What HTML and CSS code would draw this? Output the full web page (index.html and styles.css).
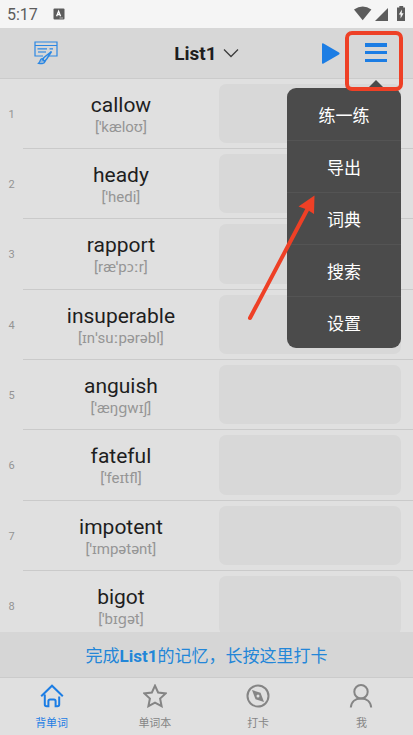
FILE: index.html
```html
<!DOCTYPE html>
<html lang="zh-CN">
<head>
<meta charset="utf-8">
<meta name="viewport" content="width=device-width, initial-scale=1">
<title>List1</title>
<link rel="stylesheet" href="styles.css">
</head>
<body>
<div class="app">
  <div class="status">
    <span class="clock">5:17</span>
    <svg class="badge" width="12" height="12" viewBox="0 0 12 12"><rect x=".5" y=".5" width="11" height="11" rx="1" fill="#5c5c5c"/><path d="M3.6 8.2 5.6 3.2 7.6 8.2M4.3 6.7H6.9" fill="none" stroke="#fff" stroke-width="1.3"/><path d="M6.500 10H10" stroke="#ccc" stroke-width=".8"/></svg>
    <svg class="signals" width="52" height="16" viewBox="0 0 52 16" fill="#5c5c5c"><path d="M0 3.400Q8.700-2.600 17.400 3.400L8.700 14.200Z"/><path d="M21 15 34 2V15Z"/><path d="M45.300 0H49.200V1.500H51V15H43V1.500H45.300Z"/><path d="M48 3.500 44.800 8.500H46.600V12.500L49.600 7.200H47.700Z" fill="#f5f5f5"/></svg>
  </div>
  <header class="bar">
    <button class="icon-btn notes" aria-label="Notes">
      <svg width="24" height="24" viewBox="0 0 24 24" fill="none" stroke="#2b87e3" stroke-width="1.200"><path d="M9 15H1V1H23V15H15M1 4.500H23M3.500 7.800H13M15.500 7.800H19"/><path d="M4 11H12" stroke-width="1.600" stroke-opacity=".7"/><path d="M17.500 10.500 10 16.500 8.500 18.500 10.800 20.300 13 17.500Z" stroke-width="1.500"/><path d="M8 17.500C5.500 18 7 20.500 4.500 22.300 8 23.200 10.500 22.500 11 20.500Z" stroke-width="1.200" fill="#2b87e3" fill-opacity=".4"/></svg>
    </button>
    <button class="title">List1
      <svg width="16" height="10" viewBox="0 0 16 10" fill="none" stroke="#3c3c3c" stroke-width="1.300"><path d="M1 1.500 8 8.500 15 1.500"/></svg>
    </button>
    <div class="actions">
      <button class="icon-btn" aria-label="Play"><svg width="18" height="21" viewBox="0 0 18 21" fill="#1c7de4"><path d="M0 1.200Q0-.4 1.500.5L17 9.500Q18.200 10.500 17 11.500L1.500 20.500Q0 21.400 0 19.800Z"/></svg></button>
      <button class="icon-btn" aria-label="Menu"><svg width="22" height="20" viewBox="0 0 22 20" fill="#1c7de4"><path d="M0 0H22V4H0ZM0 8H22V11H0ZM0 16H22V19H0Z"/></svg></button>
    </div>
  </header>
  <main class="list-wrap">
    <ol class="list">
      <li><span class="num">1</span><div class="word"><b>callow</b><i>[ˈkæloʊ]</i></div><div class="card"></div></li>
      <li><span class="num">2</span><div class="word"><b>heady</b><i>[ˈhedi]</i></div><div class="card"></div></li>
      <li><span class="num">3</span><div class="word"><b>rapport</b><i>[ræˈpɔːr]</i></div><div class="card"></div></li>
      <li><span class="num">4</span><div class="word"><b>insuperable</b><i>[ɪnˈsuːpərəbl]</i></div><div class="card"></div></li>
      <li><span class="num">5</span><div class="word"><b>anguish</b><i>[ˈæŋɡwɪʃ]</i></div><div class="card"></div></li>
      <li><span class="num">6</span><div class="word"><b>fateful</b><i>[ˈfeɪtfl]</i></div><div class="card"></div></li>
      <li><span class="num">7</span><div class="word"><b>impotent</b><i>[ˈɪmpətənt]</i></div><div class="card"></div></li>
      <li><span class="num">8</span><div class="word"><b>bigot</b><i>[ˈbɪɡət]</i></div><div class="card"></div></li>
    </ol>
  </main>
  <button class="checkin">完成<strong>List1</strong>的记忆，长按这里打卡</button>
  <nav class="tabs">
    <a href="#" class="active"><svg viewBox="0 0 24 24"><path d="M1.200 12.300 12 1.700 22.800 12.300M4.800 10.500V20.500Q4.800 22.300 6.600 22.300H8.400V17Q8.400 15.500 10 15.500H14Q15.600 15.500 15.600 17V22.300H17.400Q19.200 22.300 19.200 20.500V12.500"/></svg>背单词</a>
    <a href="#"><svg viewBox="0 0 24 24"><path d="M12 1.700 15.100 8.500 22.700 9.400 17.100 14.500 18.600 22.200 12 18.600 5.400 22.200 6.900 14.500 1.300 9.400 8.900 8.500Z"/></svg>单词本</a>
    <a href="#"><svg viewBox="0 0 24 24"><circle cx="12" cy="12" r="10.500"/><path d="M6 6 14.500 8.800 18 18 9.500 15.200Z" fill="#858585" stroke="none"/><circle cx="12" cy="12" r="1.500" fill="#e0e0e0" stroke="none"/></svg>打卡</a>
    <a href="#"><svg viewBox="0 0 24 24"><circle cx="12" cy="7.800" r="6.700"/><path d="M1.800 23.500C2.300 17.500 6.500 14.500 12 14.500S21.700 17.500 22.200 23.500"/></svg>我</a>
  </nav>
  <div class="menu">
    <button>练一练</button>
    <button>导出</button>
    <button>词典</button>
    <button>搜索</button>
    <button>设置</button>
  </div>
  <div class="highlight"></div>
  <svg class="pointer" width="68" height="128" viewBox="0 0 68 128"><path d="M3 124 60 16" stroke="#ee4026" stroke-width="4" stroke-linecap="round"/><path d="M67.500 1.500 67 20 60 15.500 51.500 12.500Z" fill="#ee4026"/></svg>
</div>
</body>
</html>
```

FILE: styles.css
```css
* { box-sizing: border-box; }

body {
  margin: 0;
  background: #e0e0e0;
  font-family: Roboto, "Noto Sans", "Noto Sans CJK SC", sans-serif;
  color: #1e1e1e;
}

button {
  border: 0;
  padding: 0;
  background: none;
  font: inherit;
  color: inherit;
}

svg { display: block; flex: none; }

.app {
  position: relative;
  display: flex;
  flex-direction: column;
  height: 100vh;
  overflow: hidden;
}

.status {
  display: flex;
  align-items: center;
  flex: none;
  height: 28px;
  padding: 0 7px;
  background: #f5f5f5;
}

.clock { font-size: 16px; color: #5c5c5c; }
.badge { margin-left: 15px; }
.signals { margin-left: auto; }

.bar {
  display: grid;
  grid-template-columns: 1fr auto 1fr;
  align-items: center;
  flex: none;
  height: 51px;
  padding: 0 26px;
  background: #d7d7d7;
  border-bottom: 1px solid #cbcbcb;
}

.title {
  display: flex;
  align-items: center;
  gap: 6px;
  font-size: 19px;
  font-weight: 700;
}

.icon-btn { justify-self: start; }
.notes { padding-left: 8px; }

.actions {
  display: flex;
  align-items: center;
  justify-content: flex-end;
  gap: 25px;
}

.list-wrap { flex: 1; min-height: 0; overflow: hidden; }

.list { margin: 0; padding: 0; list-style: none; }

.list li {
  position: relative;
  display: grid;
  grid-template-columns: 23px 1fr 47%;
  height: 70px;
}

.list li:nth-child(3n) { height: 71px; }

.list li::after {
  content: "";
  position: absolute;
  left: 23px;
  right: 0;
  bottom: 0;
  height: 1px;
  background: #cacaca;
}

.num {
  align-self: center;
  text-align: center;
  font-size: 11px;
  color: #949494;
}

.word {
  display: flex;
  flex-direction: column;
  align-items: center;
  padding-top: 13px;
}

.word b {
  font-size: 21px;
  line-height: 26px;
  font-weight: 400;
}

.word i {
  font-size: 15px;
  line-height: 18px;
  font-style: normal;
  color: #959595;
}

.card {
  margin: 5px 12px 6px 0;
  border-radius: 7px;
  background: #d8d8d8;
}

.checkin {
  flex: none;
  height: 45px;
  background: #d6d6d6;
  font-size: 17px;
  color: #2386d8;
}

.tabs {
  display: grid;
  grid-template-columns: repeat(4, 1fr);
  flex: none;
  height: 58px;
  padding-top: 6px;
  border-top: 1px solid #cbcbcb;
}

.tabs a {
  display: flex;
  flex-direction: column;
  align-items: center;
  gap: 7px;
  font-size: 11px;
  line-height: 18px;
  color: #858585;
  text-decoration: none;
}

.tabs svg {
  width: 24px;
  height: 24px;
  fill: none;
  stroke: currentColor;
  stroke-width: 2;
}

.tabs .active { color: #1c7de4; }

.menu {
  position: absolute;
  top: 88px;
  right: 12px;
  width: 114px;
  border-radius: 9px;
  background: #4b4b4b;
}

.menu::before {
  content: "";
  position: absolute;
  top: -8px;
  right: 17px;
  border: 8px solid transparent;
  border-top: 0;
  border-bottom-color: #4b4b4b;
}

.menu button {
  display: block;
  width: 100%;
  height: 52px;
  font-size: 17px;
  color: #fff;
}

.menu button + button { border-top: 1px solid #545454; }

.highlight {
  position: absolute;
  top: 31px;
  right: 10px;
  width: 58px;
  height: 60px;
  border: 4px solid #ee4026;
  border-radius: 7px;
}

.pointer {
  position: absolute;
  top: 194px;
  right: 98px;
}
```
